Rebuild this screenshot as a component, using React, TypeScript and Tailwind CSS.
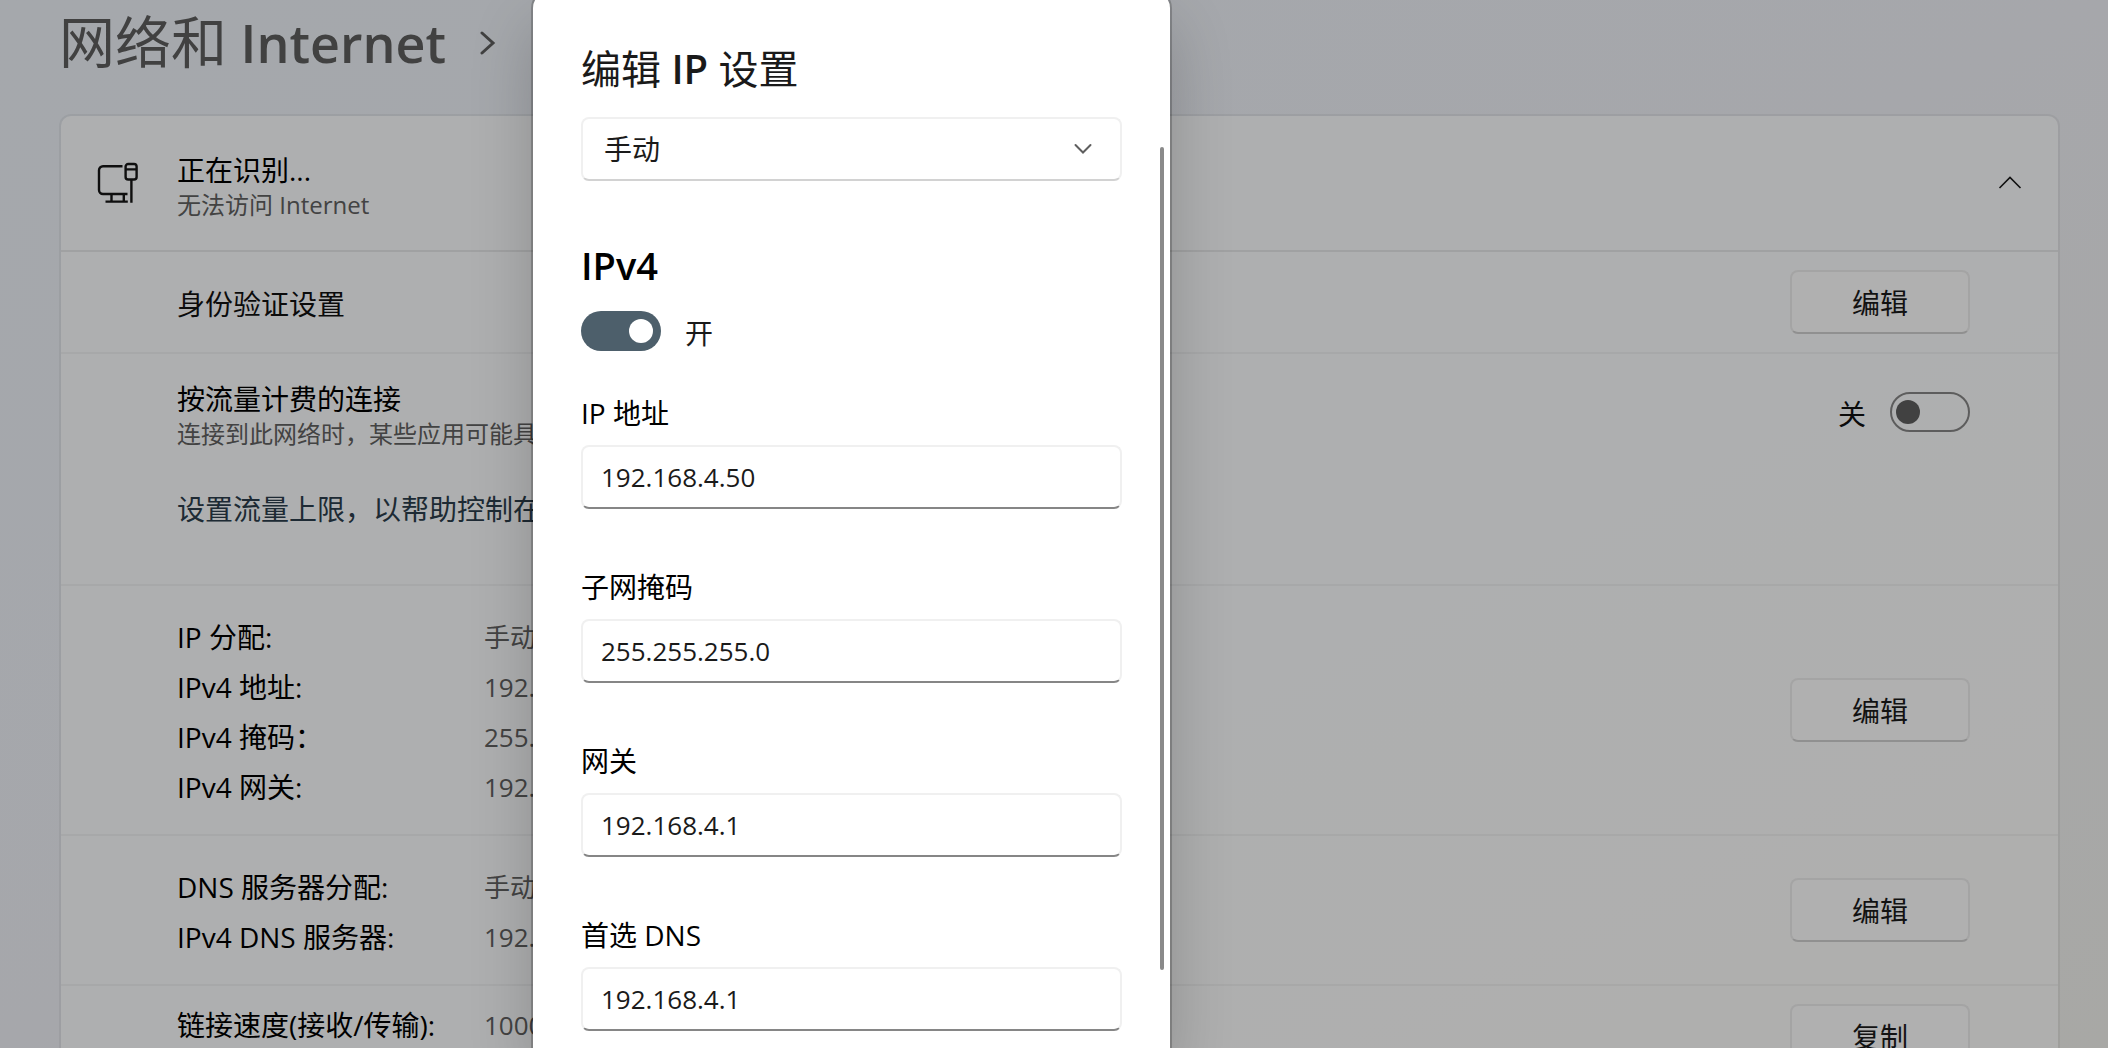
import React, { useId, useState } from 'react';

type Entry = { label: string; value: string };

const assignment: Entry[] = [
  { label: 'IP 分配:', value: '手动' },
  { label: 'IPv4 地址:', value: '192.168.4.50' },
  { label: 'IPv4 掩码：', value: '255.255.255.0' },
  { label: 'IPv4 网关:', value: '192.168.4.1' },
];

const dns: Entry[] = [
  { label: 'DNS 服务器分配:', value: '手动' },
  { label: 'IPv4 DNS 服务器:', value: '192.168.4.1' },
];

const link: Entry[] = [{ label: '链接速度(接收/传输):', value: '1000/1000 (Mbps)' }];

const fields: Entry[] = [
  { label: 'IP 地址', value: '192.168.4.50' },
  { label: '子网掩码', value: '255.255.255.0' },
  { label: '网关', value: '192.168.4.1' },
  { label: '首选 DNS', value: '192.168.4.1' },
];

function EthernetIcon() {
  return (
    <svg width="42" height="42" viewBox="0 0 42 42" fill="none" stroke="#161616" strokeWidth="2.4" aria-hidden="true">
      <path d="M25.5 4.2H6A4 4 0 0 0 2 8.2V28a4 4 0 0 0 4 4H30.5" />
      <path d="M14.5 32v7.4M26.8 32v7.4M8.5 39.6H30.8" />
      <rect x="28.6" y="2" width="11" height="15.5" rx="2.6" />
      <path d="M28.6 7.4h11M34.4 17.5v23.3" />
    </svg>
  );
}

function EntryList({ entries }: { entries: Entry[] }) {
  return (
    <dl className="flex-1 text-[28px] leading-[50px]">
      {entries.map((e) => (
        <div key={e.label} className="flex">
          <dt className="w-[307px] shrink-0 text-black">{e.label}</dt>
          <dd className="text-[26px] text-[#606060]">{e.value}</dd>
        </div>
      ))}
    </dl>
  );
}

function ActionButton({ children }: { children: React.ReactNode }) {
  return (
    <button
      type="button"
      className="h-16 w-[180px] shrink-0 rounded-lg border-2 border-[#ebebeb] border-b-[#cfcfcf] bg-[#fcfcfc] pt-0.5 text-[28px] leading-10 text-[#1a1a1a]"
    >
      {children}
    </button>
  );
}

function Field({ label, value }: Entry) {
  const id = useId();
  return (
    <div className="flex flex-col gap-3">
      <label htmlFor={id} className="text-[28px] leading-10 text-black">
        {label}
      </label>
      <input
        id={id}
        type="text"
        defaultValue={value}
        className="h-16 w-full rounded-lg border-2 border-[#f0f0f0] border-b-[#868686] bg-white px-[18px] text-[26px] text-[#1a1a1a] outline-none"
      />
    </div>
  );
}

export default function App() {
  const [metered, setMetered] = useState(false);
  const [ipv4, setIpv4] = useState(true);
  return (
    <div className='relative h-screen overflow-hidden bg-linear-to-br from-[#ecf1f7] via-[#eef0f5] to-[#f1f1ed] font-["Open_Sans","Noto_Sans_CJK_SC",sans-serif] text-[28px]'>
      <main className="pr-12 pl-[59px]">
        <h1 className="flex h-[114px] items-start gap-[34px] text-[52px] leading-[82px] font-semibold text-[#5e5e5e]">
          <span>
            <span className="text-[56px] font-normal">网络和</span> Internet
          </span>
          <svg className="mt-[31px]" width="16" height="24" viewBox="0 0 16 24" fill="none" stroke="currentColor" strokeWidth="3" strokeLinecap="round" aria-hidden="true">
            <path d="M2 2l11 10L2 22" />
          </svg>
        </h1>

        <section className="rounded-xl border-2 border-black/5 bg-white/70 bg-clip-padding">
          <header className="flex h-[136px] items-center border-b-2 border-black/8 pr-9 pl-9">
            <EthernetIcon />
            <div className="ml-[38px] flex-1 pt-1">
              <h2 className="leading-10 text-black">正在识别...</h2>
              <p className="text-2xl leading-[30px] text-[#606060]">无法访问 Internet</p>
            </div>
            <button type="button" aria-label="折叠" className="flex size-6 items-center justify-center">
              <svg width="24" height="14" viewBox="0 0 24 14" fill="none" stroke="#1a1a1a" strokeWidth="1.6" aria-hidden="true">
                <path d="M1.5 12L12 1.5 22.5 12" />
              </svg>
            </button>
          </header>

          <div className="flex items-center justify-between border-b-2 border-black/4 py-[18px] pr-[88px] pl-[116px]">
            <h3 className="pt-1 leading-10 text-[#111]">身份验证设置</h3>
            <ActionButton>编辑</ActionButton>
          </div>

          <div className="flex h-[232px] items-start justify-between border-b-2 border-black/4 pt-[25px] pr-[88px] pl-[116px]">
            <div>
              <h3 className="leading-10 text-black">按流量计费的连接</h3>
              <p className="text-2xl leading-[30px] text-[#606060]">连接到此网络时，某些应用可能具有不同的工作方式，以减少数据使用量</p>
              <a href="#data-limit" className="mt-10 block leading-10 text-[#2b3d4b]">
                设置流量上限，以帮助控制在此网络上的数据使用量
              </a>
            </div>
            <label className="flex items-center gap-6 pt-[11px] text-[#111]">
              <span className="pt-1 leading-10">{metered ? '开' : '关'}</span>
              <input
                type="checkbox"
                role="switch"
                checked={metered}
                onChange={(e) => setMetered(e.target.checked)}
                className="flex h-10 w-20 appearance-none items-center rounded-full border-2 border-[#868686] px-1 before:size-6 before:rounded-full before:bg-[#5e5e5e] checked:justify-end"
              />
            </label>
          </div>

          <div className="flex h-[250px] items-center border-b-2 border-black/4 pr-[88px] pl-[116px]">
            <div className="flex-1 pt-1">
              <EntryList entries={assignment} />
            </div>
            <ActionButton>编辑</ActionButton>
          </div>
          <div className="flex h-[150px] items-center border-b-2 border-black/4 pr-[88px] pl-[116px]">
            <div className="flex-1 pt-1">
              <EntryList entries={dns} />
            </div>
            <ActionButton>编辑</ActionButton>
          </div>
          <div className="flex items-start pt-3.5 pr-[88px] pb-6 pl-[116px]">
            <EntryList entries={link} />
            <div className="pt-1">
              <ActionButton>复制</ActionButton>
            </div>
          </div>
        </section>
      </main>

      <div className="absolute inset-0 flex bg-black/30 pl-[533px]">
        <div
          role="dialog"
          aria-modal="true"
          aria-labelledby="ip-dialog-title"
          className="relative -mt-2 w-[637px] rounded-t-2xl bg-white px-12 pt-[49px] shadow-[0_0_0_2px_rgba(0,0,0,0.2),0_32px_64px_rgba(0,0,0,0.2)]"
        >
          <h2 id="ip-dialog-title" className="text-[40px] leading-14 font-semibold text-[#1a1a1a]">
            <span className="font-normal">编辑</span> IP <span className="font-normal">设置</span>
          </h2>
          <div className="relative mt-5">
            <select
              aria-label="IP 设置方式"
              defaultValue="manual"
              className="h-16 w-full appearance-none rounded-lg border-2 border-[#f0f0f0] border-b-[#d2d2d2] bg-white px-[21px] text-[28px] text-[#1a1a1a]"
            >
              <option value="manual">手动</option>
              <option value="dhcp">自动(DHCP)</option>
            </select>
            <svg className="pointer-events-none absolute top-[26px] right-[30px]" width="18" height="12" viewBox="0 0 18 12" fill="none" stroke="#5e5e5e" strokeWidth="2" strokeLinecap="round" aria-hidden="true">
              <path d="M1.5 2L9 9.5 16.5 2" />
            </svg>
          </div>

          <h3 className="mt-14 text-[38px] leading-14 font-semibold text-black">IPv4</h3>
          <label className="mt-[18px] flex items-center gap-6 text-[#1a1a1a]">
            <input
              type="checkbox"
              role="switch"
              checked={ipv4}
              onChange={(e) => setIpv4(e.target.checked)}
              className="flex h-10 w-20 appearance-none items-center rounded-full bg-[#4d5f6b] px-2 before:size-6 before:rounded-full before:bg-white checked:justify-end"
            />
            <span className="pt-1 leading-9">{ipv4 ? '开' : '关'}</span>
          </label>

          <form className="mt-[42px] flex flex-col gap-[58px]">
            {fields.map((f) => (
              <Field key={f.label} {...f} />
            ))}
          </form>
          <div className="absolute top-[155px] right-1.5 h-[823px] w-1 rounded-full bg-[#8a8a8a]" />
        </div>
      </div>
    </div>
  );
}
